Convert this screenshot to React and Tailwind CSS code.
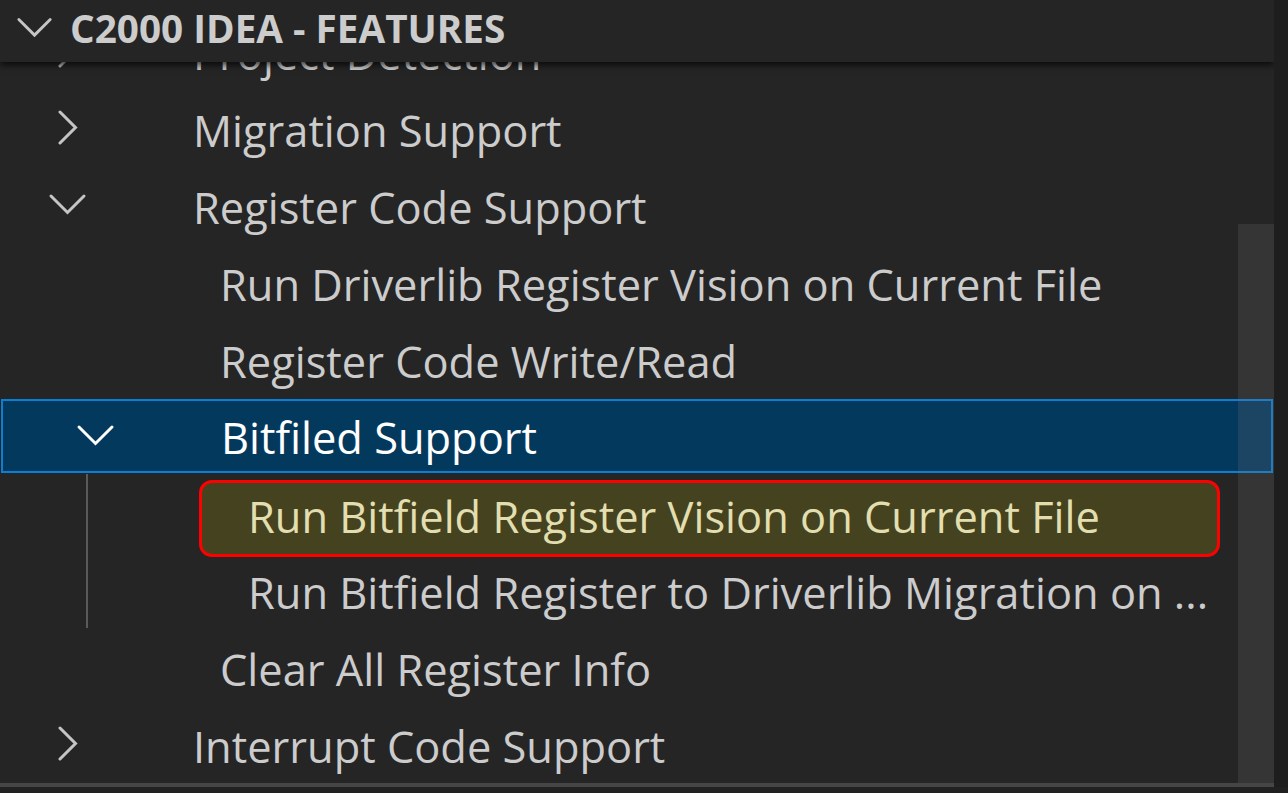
import React from "react";

const FONT = { fontFamily: '"Open Sans", "Noto Sans", sans-serif' };

function ChevronRight() {
  return (
    <svg width="24" height="36" viewBox="0 0 24 36" fill="none">
      <polyline points="4,2 19.5,17.5 4,33" stroke="#c5c5c5" strokeWidth="3" strokeLinecap="round" strokeLinejoin="miter" />
    </svg>
  );
}

function ChevronDown({ color = "#c5c5c5" }) {
  return (
    <svg width="40" height="24" viewBox="0 0 40 24" fill="none">
      <polyline points="3,3 19.5,19.5 36,3" stroke={color} strokeWidth="3" strokeLinecap="round" strokeLinejoin="miter" />
    </svg>
  );
}

function Label({ children, className = "" }) {
  return (
    <span className={"text-[43.4px] whitespace-nowrap leading-none " + className} style={FONT}>
      {children}
    </span>
  );
}

function Branch({ open, label }) {
  return (
    <div className="h-[77px] flex items-center pl-[48px]">
      <div className="w-[40px] flex justify-center items-center">
        {open ? <ChevronDown /> : <ChevronRight />}
      </div>
      <div className="ml-[105px] pt-[6px] text-[#cccccc]">
        <Label>{label}</Label>
      </div>
    </div>
  );
}

function Leaf1({ label }) {
  return (
    <div className="h-[77px] flex items-center pl-[220px] pt-[6px] text-[#cccccc]">
      <Label>{label}</Label>
    </div>
  );
}

export default function App() {
  return (
    <div className="w-[1288px] h-[793px] bg-[#1e1e1e] flex flex-col overflow-hidden">
      <div className="flex h-[783px]">
        <div className="relative w-[1274px] h-full bg-[#252526] overflow-hidden flex flex-col">
          {/* sticky header */}
          <div className="relative z-10 h-[62px] shrink-0 bg-[#252526] flex items-center pl-[16px] pb-[6px] shadow-[0_3px_7px_rgba(0,0,0,0.75)]">
            <div className="w-[38px] flex justify-center items-center">
              <ChevronDown color="#c5c5c5" />
            </div>
            <span
              className="ml-[16px] text-[38.7px] font-bold text-[#cccccc] whitespace-nowrap leading-none"
              style={FONT}
            >
              C2000 IDEA - FEATURES
            </span>
          </div>

          {/* tree */}
          <div className="mt-[-50px] flex flex-col">
            <Branch open={false} label="Project Detection" />
            <Branch open={false} label="Migration Support" />
            <Branch open={true} label="Register Code Support" />
            <Leaf1 label="Run Driverlib Register Vision on Current File" />
            <Leaf1 label="Register Code Write/Read" />

            {/* selected row */}
            <div className="h-[77px] pt-[2px]">
              <div className="h-[74px] ml-[1px] mr-[1px] bg-[#04395e] border-2 border-[#0a7fd6] flex items-center pl-[73px]">
                <div className="w-[40px] flex justify-center items-center">
                  <ChevronDown color="#ffffff" />
                </div>
                <div className="ml-[105px] pt-[3px] text-white">
                  <Label>Bitfiled Support</Label>
                </div>
              </div>
            </div>

            {/* level-2 group with indent guide */}
            <div className="ml-[86px] border-l-2 border-[#5a5a5a] flex flex-col">
              <div className="h-[77px]">
                <div className="mt-[6px] ml-[111px] w-[1021px] h-[77px] rounded-[13px] border-[3px] border-[#ff0000] bg-[#45431f] flex items-center pl-[46px] pb-[4px] text-[#e2deb0]">
                  <Label>Run Bitfield Register Vision on Current File</Label>
                </div>
              </div>
              <div className="h-[77px] flex items-center pl-[160px] pt-[7px] text-[#cccccc]">
                <Label>Run Bitfield Register to Driverlib Migration on ...</Label>
              </div>
            </div>

            <Leaf1 label="Clear All Register Info" />
            <Branch open={false} label="Interrupt Code Support" />
          </div>

          {/* overlay scrollbar */}
          <div className="absolute right-0 top-[224px] bottom-0 w-[36px] bg-[rgba(121,121,121,0.2)]" />
        </div>
        <div className="flex-1 bg-[#1e1e1e]" />
      </div>
      <div className="w-[1274px] h-[4px] bg-[#454545]" />
      <div className="flex-1 bg-[#212121]" />
    </div>
  );
}
